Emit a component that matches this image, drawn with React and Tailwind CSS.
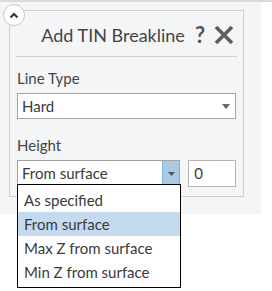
export default function App() {
  const options = ["As specified", "From surface", "Max Z from surface", "Min Z from surface"];
  const selected = "From surface";

  return (
    <div className="relative w-[272px] h-[291px] bg-white text-[#444] font-['Lato',sans-serif]">
      <div className="h-[2px] bg-[#dadada]" />
      <div className="w-[261px] h-[212px] bg-[#f4f5f7] pt-[8px] pl-[9px]">
        <div className="w-[235px] h-[187px] border border-[#cfcfcf]">
          {/* title */}
          <div className="flex items-center justify-end h-[45px] pr-[8px] pt-[3px]">
            <span className="text-[18px] text-[#444] mr-[10px]">Add TIN Breakline</span>
            <span className="text-[22px] font-bold text-[#555] mr-[8px] leading-none">?</span>
            <svg width="22" height="22" viewBox="0 0 22 22">
              <path d="M3 3 L19 19 M19 3 L3 19" stroke="#5f5f5f" strokeWidth="3.6" />
            </svg>
          </div>
          <div className="mx-[6px] h-px bg-[#d0d0d0]" />

          <div className="px-[7px] pt-[11px]">
            <div className="text-[15px] leading-[20px]">Line Type</div>
            <div className="mt-[5px] flex items-center h-[26px] w-[219px] border border-[#a3a3a3] bg-white pl-[4px] pr-[5px]">
              <span className="flex-1 text-[15px] text-[#3a3a3a]">Hard</span>
              <svg width="8" height="5" viewBox="0 0 8 5">
                <path d="M0 0 H8 L4 5 Z" fill="#666" />
              </svg>
            </div>

            <div className="mt-[16px] text-[15px] leading-[20px]">Height</div>
            <div className="mt-[5px] flex gap-[8px]">
              <div className="flex h-[27px] w-[164px] border border-[#a3a3a3] bg-white">
                <span className="flex-1 pl-[4px] text-[15px] leading-[25px] text-[#3a3a3a]">{selected}</span>
                <div className="w-[17px] flex items-center justify-center bg-[#a9c9e4] border-l border-[#86b1d8]">
                  <svg width="7" height="4" viewBox="0 0 7 4">
                    <path d="M0 0 H7 L3.5 4 Z" fill="#555" />
                  </svg>
                </div>
              </div>
              <div className="h-[27px] w-[48px] border border-[#b4b4b4] bg-white pl-[5px] text-[15px] leading-[25px] text-[#3a3a3a]">0</div>
            </div>
          </div>
        </div>
      </div>

      {/* collapse button */}
      <div className="absolute left-[3px] top-[4px] w-[22px] h-[22px] rounded-full border border-[#c8c8c8] bg-white flex items-center justify-center">
        <svg width="10" height="7" viewBox="0 0 10 7">
          <path d="M1.5 5.5 L5 2 L8.5 5.5" stroke="#333" strokeWidth="2" fill="none" />
        </svg>
      </div>

      {/* dropdown list */}
      <div className="absolute left-[17px] top-[184px] w-[164px] border border-black bg-white py-[3px]">
        {options.map((o) => (
          <div
            key={o}
            className={`h-[24px] pl-[6px] text-[15px] leading-[24px] text-[#3a3a3a] ${
              o === selected ? "bg-[#c4dbef]" : ""
            }`}
          >
            {o}
          </div>
        ))}
      </div>
    </div>
  );
}
